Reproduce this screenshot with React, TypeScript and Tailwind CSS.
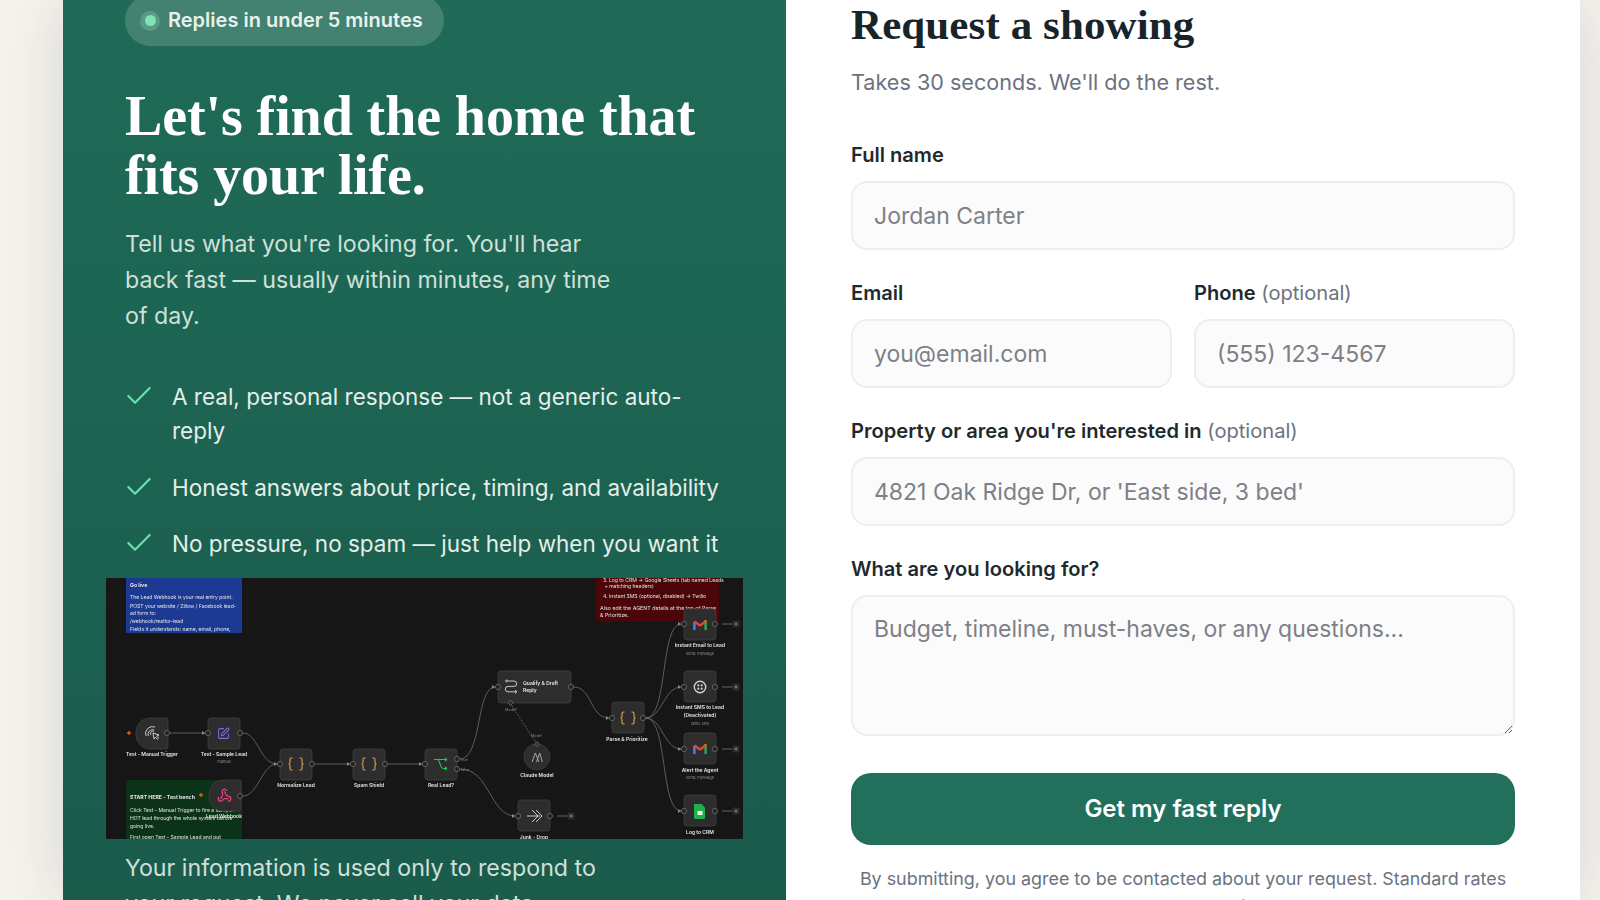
import { Check, SquarePen, Webhook } from 'lucide-react'
import React from 'react'

const sans = "font-['Inter','Liberation_Sans',sans-serif]"

const bullets = [
  { text: 'A real, personal response — not a generic auto-reply', cls: 'mb-[23px]' },
  { text: 'Honest answers about price, timing, and availability', cls: 'mb-[22px]' },
  { text: 'No pressure, no spam — just help when you want it', cls: '' },
]

// --- workflow picture ---

const Port = ({ x, y }: { x: number; y: number }) => (
  <circle cx={x} cy={y} r="2.6" fill="#222" stroke="#666" strokeWidth="0.9" />
)

const Box = ({ x, y, w = 32, h = 31 }: { x: number; y: number; w?: number; h?: number }) => (
  <rect x={x} y={y} width={w} height={h} rx="3" fill="#2d2d2d" stroke="#3f3f3f" strokeWidth="0.8" />
)

const TriggerBox = ({ x, y }: { x: number; y: number }) => (
  <path
    d={`M${x + 14} ${y}h16a2 2 0 0 1 2 2v27a2 2 0 0 1-2 2h-16a14 14 0 0 1-14-14v-3a14 14 0 0 1 14-14z`}
    fill="#2d2d2d"
    stroke="#3f3f3f"
    strokeWidth="0.8"
  />
)

const Label = ({ x, y, children, sub }: { x: number; y: number; children: React.ReactNode; sub?: boolean }) => (
  <text
    x={x}
    y={y}
    textAnchor="middle"
    fontSize={sub ? 3.9 : 5}
    fontWeight={sub ? 400 : 600}
    fill={sub ? '#8e8e8e' : '#e6e6e6'}
    fontFamily="Inter, sans-serif"
  >
    {children}
  </text>
)

const Braces = ({ cx, cy }: { cx: number; cy: number }) => (
  <g transform={`translate(${cx} ${cy})`} fill="none" stroke="#e0a458" strokeWidth="1.1">
    <path d="M-3.5 -6h-1a1.5 1.5 0 0 0-1.5 1.5v3a1.5 1.5 0 0 1-1.5 1.5a1.5 1.5 0 0 1 1.5 1.5v3a1.5 1.5 0 0 0 1.5 1.5h1" />
    <path d="M3.5 -6h1a1.5 1.5 0 0 1 1.5 1.5v3a1.5 1.5 0 0 0 1.5 1.5a1.5 1.5 0 0 0-1.5 1.5v3a1.5 1.5 0 0 1-1.5 1.5h-1" />
  </g>
)

const Gmail = ({ cx, cy }: { cx: number; cy: number }) => (
  <g transform={`translate(${cx} ${cy})`} fill="none" strokeWidth="2.4">
    <path d="M-5.6 5V-3.4" stroke="#4285f4" />
    <path d="M5.6 5V-3.4" stroke="#34a853" />
    <path d="M-5.4 -3.6L0 0.8" stroke="#ea4335" />
    <path d="M5.4 -3.6L0 0.8" stroke="#ea4335" />
    <path d="M5.6 -3.6V-4.6" stroke="#fbbc04" />
  </g>
)

const Plus = ({ x, y }: { x: number; y: number }) => (
  <g>
    <path d={`M${x - 14} ${y}H${x - 3}`} stroke="#777" strokeWidth="0.8" />
    <rect x={x - 3.5} y={y - 3.5} width="7" height="7" rx="1.4" fill="#2c2c2c" />
    <path d={`M${x - 1.5} ${y}h3M${x} ${y - 1.5}v3`} stroke="#aaa" strokeWidth="0.7" />
  </g>
)

const Note = ({ x, y, lines }: { x: number; y: number; lines: { t: string; dy: number; b?: boolean; s?: number }[] }) => (
  <text fontFamily="Inter, sans-serif" fill="#e3e3e3" fontSize="5.05">
    {lines.map((l) => (
      <tspan key={l.t} x={x} y={y + l.dy} fontWeight={l.b ? 700 : 400} fontSize={l.s ?? 5.05}>
        {l.t}
      </tspan>
    ))}
  </text>
)

const Workflow = () => (
  <svg viewBox="106 578 637 261" className="-ml-[19px] block h-[261px] w-[637px] blur-[0.45px]">
    <defs>
      <pattern id="dots" x="106" y="578" width="7" height="7" patternUnits="userSpaceOnUse">
        <circle cx="1" cy="1" r="0.4" fill="#2b2b2b" />
      </pattern>
    </defs>
    <rect x="106" y="578" width="637" height="261" fill="#161616" />
    <rect x="106" y="578" width="637" height="261" fill="url(#dots)" />

    {/* sticky notes */}
    <rect x="126" y="578" width="116" height="55" fill="#1c3a94" />
    <Note
      x={130}
      y={578}
      lines={[
        { t: 'Go live', dy: 9, b: true, s: 5.2 },
        { t: 'The Lead Webhook is your real entry point.', dy: 21 },
        { t: 'POST your website / Zillow / Facebook lead-', dy: 30 },
        { t: 'ad form to:', dy: 37 },
        { t: '/webhook/realtor-lead', dy: 45 },
        { t: 'Fields it understands: name, email, phone,', dy: 53 },
      ]}
    />
    <rect x="596" y="578" width="123" height="44" rx="1.5" fill="#4a0608" />
    <Note
      x={603}
      y={578}
      lines={[
        { t: '3.  Log to CRM → Google Sheets (tab named Leads', dy: 4 },
        { t: '     + matching headers)', dy: 10 },
        { t: '4.  Instant SMS (optional, disabled) → Twilio', dy: 20 },
      ]}
    />
    <Note
      x={600}
      y={578}
      lines={[
        { t: 'Also edit the AGENT details at the top of Parse', dy: 32, s: 5.3 },
        { t: '& Prioritize.', dy: 39, s: 5.3 },
      ]}
    />
    <rect x="126" y="780" width="116" height="59" rx="1.5" fill="#0a3317" />
    <Note
      x={130}
      y={780}
      lines={[
        { t: 'START HERE - Test bench', dy: 19, b: true, s: 5.2 },
        { t: 'Click Test - Manual Trigger to fire a sample', dy: 32 },
        { t: 'HOT lead through the whole system before', dy: 40 },
        { t: 'going live.', dy: 48 },
        { t: 'First open Test - Sample Lead and put', dy: 59 },
      ]}
    />

    {/* connections */}
    <g fill="none" stroke="#6f6f6f" strokeWidth="0.8">
      <path d="M170 733H205" />
      <path d="M243 733C258 733 260 764 277 764" />
      <path d="M243 796C258 796 262 764 277 764" />
      <path d="M315 764H350" />
      <path d="M388 764H422" />
      <path d="M460 759C482 759 476 687 495 687" />
      <path d="M460 769C490 769 490 816 515 816" />
      <path d="M574 687C592 687 590 718 609 718" />
      <path d="M646 718C668 718 660 624 681 624" />
      <path d="M646 718C662 718 664 687 681 687" />
      <path d="M646 718C662 718 664 749 681 749" />
      <path d="M646 718C668 718 660 811 681 811" />
      <path d="M510 703L537 744" strokeDasharray="2 1.4" />
    </g>
    <g fill="#8a8a8a">
      <path d="M205 733l-3-2v4z" />
      <path d="M277 764l-3-2v4z" />
      <path d="M350 764l-3-2v4z" />
      <path d="M422 764l-3-2v4z" />
      <path d="M495 687l-3-2v4z" />
      <path d="M515 816l-3-2v4z" />
      <path d="M609 718l-3-2v4z" />
      <path d="M681 624l-3-2v4z" />
      <path d="M681 687l-3-2v4z" />
      <path d="M681 749l-3-2v4z" />
      <path d="M681 811l-3-2v4z" />
    </g>
    <path d="M127 733h4M129 731v4" stroke="#e8590c" strokeWidth="1.3" />

    {/* nodes */}
    <TriggerBox x={136} y={718} />
    <g transform="translate(152 733)" fill="none" stroke="#d8d8d8" strokeWidth="0.9">
      <path d="M-6 3a7 7 0 0 1 9-9" />
      <path d="M-3.6 3a4.6 4.6 0 0 1 6-6" />
      <path d="M-1 2a2 2 0 0 1 3-3" />
      <path d="M1 0l6 2-2.4 1 2 2-1.4 1.4-2-2L2 6z" />
    </g>
    <Port x={167} y={733} />
    <Label x={152} y={756}>Test - Manual Trigger</Label>

    <Box x={208} y={718} />
    <SquarePen x={217} y={727} width={13} height={13} color="#7b6fe0" strokeWidth={1.9} />
    <Port x={208} y={733} />
    <Port x={240} y={733} />
    <Label x={224} y={756}>Test - Sample Lead</Label>
    <Label x={224} y={763} sub>manual</Label>

    <TriggerBox x={209} y={780} />
    <Webhook x={217} y={788} width={15} height={15} color="#e0457b" strokeWidth={2} />
    <Port x={240} y={796} />
    <path d="M199 795h4M201 793v4" stroke="#e8590c" strokeWidth="1.3" />
    <Label x={224} y={818}>Lead Webhook</Label>

    <Box x={280} y={749} />
    <Braces cx={296} cy={764} />
    <Port x={280} y={764} />
    <Port x={312} y={764} />
    <Label x={296} y={787}>Normalize Lead</Label>

    <Box x={353} y={749} />
    <Braces cx={369} cy={764} />
    <Port x={353} y={764} />
    <Port x={385} y={764} />
    <Label x={369} y={787}>Spam Shield</Label>

    <Box x={425} y={749} />
    <g transform="translate(441 764)" fill="none" stroke="#22c55e" strokeWidth="1.1">
      <path d="M-7 -4.5H6M6 -4.5l-2-1.6M6 -4.5l-2 1.6" />
      <path d="M-3.5 -4.5C-1 -4.5-1 4.5 2 4.5H6M6 4.5l-2-1.6M6 4.5l-2 1.6" />
    </g>
    <Port x={425} y={764} />
    <Port x={457} y={759} />
    <Port x={457} y={769} />
    <Label x={441} y={787}>Real Lead?</Label>
    <text x={461} y={761} fontSize="3.6" fill="#8e8e8e">true</text>
    <text x={461} y={771} fontSize="3.6" fill="#8e8e8e">false</text>

    <Box x={498} y={671} w={73} h={32} />
    <g transform="translate(511 687)" fill="none" stroke="#d8d8d8" strokeWidth="0.9">
      <path d="M-3 -6H3a2.4 2.4 0 0 1 0 5.4H-3a2.4 2.4 0 0 0 0 5.4H5" />
      <circle cx="-4.4" cy="-6" r="1" />
      <path d="M4 3l2 1.8-2 1.8" />
    </g>
    <text x={523} y={685} fontSize="5" fontWeight="600" fill="#e6e6e6" fontFamily="Inter, sans-serif">Qualify &amp; Draft</text>
    <text x={523} y={692} fontSize="5" fontWeight="600" fill="#e6e6e6" fontFamily="Inter, sans-serif">Reply</text>
    <Port x={498} y={687} />
    <Port x={571} y={687} />
    <path d="M510.5 700l2.6 2.8-2.6 2.8-2.6-2.8z" fill="#2d2d2d" stroke="#777" strokeWidth="0.7" />
    <text x={505} y={711} fontSize="3.6" fill="#8e8e8e">Model<tspan fill="#e03131">*</tspan></text>

    <circle cx="537" cy="757" r="13" fill="#2d2d2d" stroke="#3f3f3f" strokeWidth="0.8" />
    <path d="M532 762l3.4-9 3.4 9M536.5 762l3.2-9 2.6 9" fill="none" stroke="#a8a8a8" strokeWidth="1" />
    <path d="M537 741.5l2.4 2.5-2.4 2.5-2.4-2.5z" fill="#2d2d2d" stroke="#777" strokeWidth="0.7" />
    <text x={531} y={737} fontSize="3.6" fill="#8e8e8e">Model</text>
    <Label x={537} y={777}>Claude Model</Label>

    <Box x={518} y={800} />
    <g transform="translate(534 816)" fill="none" stroke="#e0e0e0" strokeWidth="0.9">
      <path d="M-7 0H6M-2 -6L4 0-2 6M2 -6L8 0 2 6" />
    </g>
    <Port x={518} y={816} />
    <Port x={550} y={816} />
    <Plus x={571} y={816} />
    <Label x={534} y={839}>Junk - Drop</Label>

    <Box x={612} y={702} />
    <Braces cx={628} cy={718} />
    <Port x={612} y={718} />
    <Port x={643} y={718} />
    <Label x={627} y={741}>Parse &amp; Prioritize</Label>

    <Box x={684} y={609} />
    <Gmail cx={700} cy={625} />
    <Port x={684} y={624} />
    <Port x={715} y={624} />
    <Plus x={736} y={624} />
    <Label x={700} y={647}>Instant Email to Lead</Label>
    <Label x={700} y={655} sub>send: message</Label>

    <Box x={684} y={671} />
    <g transform="translate(700 687)">
      <circle r="5.7" fill="none" stroke="#d0d0d0" strokeWidth="1.4" />
      <g fill="#d0d0d0">
        <circle cx="-1.7" cy="-1.7" r="1.1" />
        <circle cx="1.7" cy="-1.7" r="1.1" />
        <circle cx="-1.7" cy="1.7" r="1.1" />
        <circle cx="1.7" cy="1.7" r="1.1" />
      </g>
    </g>
    <Port x={684} y={687} />
    <Port x={715} y={687} />
    <Plus x={736} y={687} />
    <Label x={700} y={709}>Instant SMS to Lead</Label>
    <Label x={700} y={717}>(Deactivated)</Label>
    <Label x={700} y={725} sub>send: sms</Label>

    <Box x={684} y={733} />
    <Gmail cx={700} cy={749} />
    <Port x={684} y={749} />
    <Port x={715} y={749} />
    <Plus x={736} y={749} />
    <Label x={700} y={772}>Alert the Agent</Label>
    <Label x={700} y={779} sub>send: message</Label>

    <Box x={684} y={795} />
    <path d="M695 804h6.5l3.5 3.5v10.5a1 1 0 0 1-1 1h-9a1 1 0 0 1-1-1v-13a1 1 0 0 1 1-1z" fill="#22b04b" />
    <rect x="697.5" y="811" width="5" height="4" fill="#e8f5ea" />
    <Port x={684} y={811} />
    <Port x={715} y={811} />
    <Plus x={736} y={811} />
    <Label x={700} y={834}>Log to CRM</Label>
  </svg>
)

// --- form bits ---

const FieldLabel = ({ children, optional }: { children: string; optional?: boolean }) => (
  <label className="mb-[14px] block h-[24px] text-[20.1px] leading-[24px] font-semibold text-[#1f2a2e]">
    {children}
    {optional && <span className="font-normal text-[#6b7280]"> (optional)</span>}
  </label>
)

const inputCls =
  'block w-full rounded-[16px] border-2 border-[#eceef1] bg-[#fbfbfb] px-[21px] text-[23px] text-[#1f2a2e] outline-none placeholder:text-[#7d8087]'

const Input = ({ placeholder }: { placeholder: string }) => (
  <input placeholder={placeholder} className={`${inputCls} h-[69px]`} />
)

export default function App() {
  return (
    <div className={`flex h-screen overflow-hidden bg-[#f4f3ee] pr-[20px] pl-[63px] ${sans}`}>
      <div className="flex min-w-0 flex-1 shadow-[0_0_60px_rgba(60,60,50,0.16)]">
        <aside className="h-[960px] w-[723px] shrink-0 bg-gradient-to-b from-[#1f6b58] to-[#1a5a4a] pr-[24px] pl-[62px]">
          <div className="-mt-[5px] flex h-[51px] w-[319px] items-center rounded-full bg-[#438170] pl-[15px]">
            <span className="mr-[8px] flex h-[20px] w-[20px] items-center justify-center rounded-full bg-[#5d9a86]">
              <span className="h-[11px] w-[11px] rounded-full bg-[#7fe3b5]" />
            </span>
            <span className="mb-[2px] text-[20px] font-semibold text-[#e7f1ed]">Replies in under 5 minutes</span>
          </div>
          <h1 className="mt-[41px] font-['Liberation_Serif',serif] text-[56px] leading-[59px] font-bold tracking-[-0.1px] text-white">
            Let's find the home that
            <br />
            fits your life.
          </h1>
          <p className="mt-[21px] w-[495px] text-[23.2px] leading-[36px] text-[#cfe0da]">
            Tell us what you're looking for. You'll hear back fast — usually within minutes, any time of day.
          </p>
          <ul className="mt-[46px]">
            {bullets.map((b) => (
              <li key={b.text} className={`flex items-start ${b.cls}`}>
                <Check className="-ml-[2px] mr-[17px] h-[32px] w-[32px] shrink-0 text-[#6ee0ae]" strokeWidth={1.6} />
                <span className="w-[552px] text-[22.5px] leading-[34px] text-[#e4eeea]">{b.text}</span>
              </li>
            ))}
          </ul>
          <div className="mt-[17px]">
            <Workflow />
          </div>
          <p className="mt-[11px] w-[495px] text-[23.2px] leading-[36px] text-[#cfe0da]">
            Your information is used only to respond to your request. We never sell your data.
          </p>
        </aside>

        <main className="h-[960px] flex-1 bg-white pr-[65px] pl-[65px]">
          <h2 className="mt-[2px] font-['Liberation_Serif',serif] text-[43px] leading-[46px] font-bold tracking-[0.1px] text-[#17242a]">
            Request a showing
          </h2>
          <p className="mt-[21px] text-[21.6px] leading-[26px] text-[#6b7280]">Takes 30 seconds. We'll do the rest.</p>
          <form className="mt-[48px]">
            <FieldLabel>Full name</FieldLabel>
            <Input placeholder="Jordan Carter" />
            <div className="mt-[31px] grid grid-cols-2 gap-[22px]">
              <div>
                <FieldLabel>Email</FieldLabel>
                <Input placeholder="you@email.com" />
              </div>
              <div>
                <FieldLabel optional>Phone</FieldLabel>
                <Input placeholder="(555) 123-4567" />
              </div>
            </div>
            <div className="mt-[31px]">
              <FieldLabel optional>Property or area you're interested in</FieldLabel>
              <Input placeholder="4821 Oak Ridge Dr, or 'East side, 3 bed'" />
            </div>
            <div className="mt-[31px]">
              <FieldLabel>What are you looking for?</FieldLabel>
              <textarea
                placeholder="Budget, timeline, must-haves, or any questions..."
                className={`${inputCls} h-[141px] py-[16px] leading-[32px]`}
              />
            </div>
            <button
              type="button"
              className="mt-[37px] block h-[72px] w-full rounded-[20px] bg-[#226f5c] text-[24px] font-semibold text-white"
            >
              Get my fast reply
            </button>
            <p className="mt-[20px] text-center text-[17.9px] leading-[28px] text-[#6b7280]">
              By submitting, you agree to be contacted about your request. Standard rates may apply. Reply STOP anytime to opt out.
            </p>
          </form>
        </main>
      </div>
    </div>
  )
}
